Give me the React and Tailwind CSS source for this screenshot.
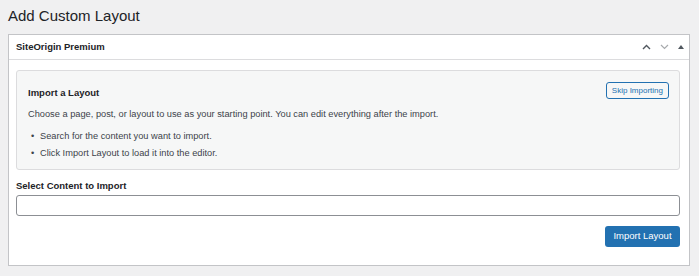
import React from "react";

export default function App() {
  const font = { fontFamily: '"Liberation Sans", Arial, sans-serif' };
  return (
    <div className="w-[699px] h-[276px] bg-[#f0f0f1] overflow-hidden text-[#1d2327]" style={font}>
      <div className="h-[34px] pl-[8px] flex items-center">
        <h1 className="text-[15px] leading-none font-normal text-[#1d2327] mb-[4px]">Add Custom Layout</h1>
      </div>
      <div className="ml-[8px] w-[682px] h-[232px] bg-white border border-[#c3c4c7]">
        <div className="h-[25px] border-b border-[#dcdcde] flex items-center justify-between pl-[7px] pr-[5px]">
          <span className="text-[9.5px] font-bold">SiteOrigin Premium</span>
          <div className="flex items-center gap-[9px] text-[#50575e]">
            <svg width="9" height="6" viewBox="0 0 9 6" fill="none"><path d="M1 5L4.5 1.5L8 5" stroke="#50575e" strokeWidth="1.4" /></svg>
            <svg width="9" height="6" viewBox="0 0 9 6" fill="none"><path d="M1 1L4.5 4.5L8 1" stroke="#a7aaad" strokeWidth="1.2" /></svg>
            <svg width="6" height="4" viewBox="0 0 6 4"><path d="M0 4L3 0L6 4Z" fill="#50575e" /></svg>
          </div>
        </div>
        <div className="pl-[7px] pr-[9px] pt-[10px]">
          <div className="h-[100px] bg-[#f6f7f7] border border-[#dcdcde] rounded-[3px] pl-[11px] pr-[10px] pt-[11px]">
            <div className="flex items-start justify-between">
              <div className="text-[9.5px] font-bold mt-[4px]">Import a Layout</div>
              <button className="h-[17px] px-[5px] text-[8px] text-[#2271b1] border border-[#2271b1] rounded-[3px] bg-[#f6f7f7] leading-none">Skip Importing</button>
            </div>
            <p className="text-[9.25px] text-[#3c434a] mt-[10px] leading-none">Choose a page, post, or layout to use as your starting point. You can edit everything after the import.</p>
            <ul className="mt-[9px] text-[9.25px] text-[#3c434a] leading-none">
              <li className="flex items-center h-[17px]"><span className="w-[12px] pl-[3px]">•</span>Search for the content you want to import.</li>
              <li className="flex items-center h-[17px]"><span className="w-[12px] pl-[3px]">•</span>Click Import Layout to load it into the editor.</li>
            </ul>
          </div>
          <div className="mt-[11px] text-[9.5px] font-bold leading-none">Select Content to Import</div>
          <div className="mt-[4px] h-[21px] border border-[#8c8f94] rounded-[3px] bg-white" />
          <div className="flex justify-end mt-[10px]">
            <button className="w-[75px] h-[21px] bg-[#2271b1] text-white text-[9.5px] rounded-[3px] leading-none">Import Layout</button>
          </div>
        </div>
      </div>
    </div>
  );
}
